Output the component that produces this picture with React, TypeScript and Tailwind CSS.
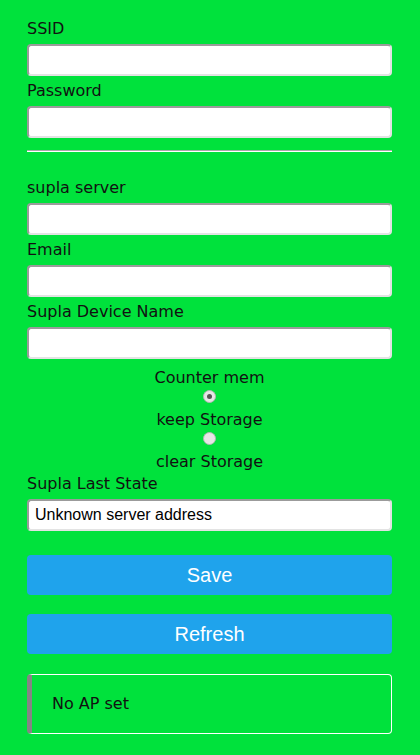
import React from "react";

const field =
  "block w-full h-8 rounded-[4px] bg-white border-2 border-t-[#9b9b9b] border-l-[#9b9b9b] border-b-[#e3e3e3] border-r-[#e3e3e3] px-1.5 text-base text-black outline-none";

function Field({ label, value }: { label: string; value?: string }) {
  return (
    <div>
      <label className="block leading-[20px] mb-[5px]">{label}</label>
      <input
        className={field}
        style={{ fontFamily: '"Liberation Sans", Arial, sans-serif' }}
        defaultValue={value}
      />
    </div>
  );
}

function Radio({ checked }: { checked?: boolean }) {
  return (
    <div className="flex justify-center mt-[2px] mb-[6px]">
      <span className="w-[13px] h-[13px] rounded-full bg-[#e6e6e6] border border-[#b5b5b5] flex items-center justify-center">
        {checked && <span className="w-[5px] h-[5px] rounded-full bg-[#555]" />}
      </span>
    </div>
  );
}

export default function App() {
  return (
    <div
      className="min-h-[755px] w-full bg-[#00e23c] text-[16px] text-[#111] pl-[27px] pr-[28px] pt-[19px]"
      style={{ fontFamily: '"DejaVu Sans", Verdana, sans-serif' }}
    >
      <div className="flex flex-col gap-[5px]">
        <Field label="SSID" />
        <Field label="Password" />
      </div>

      <div className="mt-[12px] border-t border-[#a9a9a9] border-b border-b-white" />

      <div className="mt-[26px] flex flex-col gap-[5px]">
        <Field label="supla server" />
        <Field label="Email" />
        <Field label="Supla Device Name" />
      </div>

      <div className="mt-[8px] text-center leading-[21px]">
        <div>Counter mem</div>
        <Radio checked />
        <div>keep Storage</div>
        <Radio />
        <div>clear Storage</div>
      </div>

      <div className="mt-[2px]">
        <Field label="Supla Last State" value="Unknown server address" />
      </div>

      <div
        className="mt-[24px] flex flex-col gap-[19px]"
        style={{ fontFamily: '"Liberation Sans", Arial, sans-serif' }}
      >
        <button className="h-10 w-full rounded-[4px] bg-[#1fa3ec] text-white text-[20px]">
          Save
        </button>
        <button className="h-10 w-full rounded-[4px] bg-[#1fa3ec] text-white text-[20px]">
          Refresh
        </button>
      </div>

      <div className="mt-[20px] h-[60px] rounded-[4px] border border-white border-l-[5px] border-l-[#858585] flex items-center pl-[20px]">
        No AP set
      </div>
    </div>
  );
}
